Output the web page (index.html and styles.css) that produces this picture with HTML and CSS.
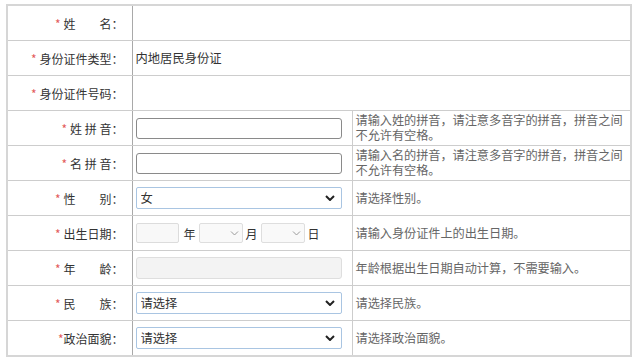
FILE: index.html
```html
<!DOCTYPE html>
<html lang="zh-CN">
<head>
    <meta charset="UTF-8">
    <title>个人信息</title>
    <link rel="stylesheet" href="styles.css">
</head>
<body>

<!-- 基本信息表 -->
<table class="info-table">
    <colgroup>
        <col class="col-label">
        <col class="col-field">
        <col class="col-hint">
    </colgroup>
    <tr>
        <td class="label"><span class="req">*</span>姓　　名：</td>
        <td colspan="2"></td>
    </tr>
    <tr>
        <td class="label"><span class="req">*</span>身份证件类型：</td>
        <td colspan="2" class="value">内地居民身份证</td>
    </tr>
    <tr>
        <td class="label"><span class="req">*</span>身份证件号码：</td>
        <td colspan="2"></td>
    </tr>
    <tr>
        <td class="label"><span class="req">*</span>姓 拼 音：</td>
        <td class="field"><input type="text" class="text-input"></td>
        <td class="hint">请输入姓的拼音，请注意多音字的拼音，拼音之间不允许有空格。</td>
    </tr>
    <tr>
        <td class="label"><span class="req">*</span>名 拼 音：</td>
        <td class="field"><input type="text" class="text-input"></td>
        <td class="hint">请输入名的拼音，请注意多音字的拼音，拼音之间不允许有空格。</td>
    </tr>
    <tr>
        <td class="label"><span class="req">*</span>性　　别：</td>
        <td class="field">
            <span class="select-wrap">
                <select class="select">
                    <option>女</option>
                    <option>男</option>
                </select>
                <svg class="chevron" width="10" height="6" viewBox="0 0 10 6"><path d="M1 1 L5 5 L9 1" fill="none" stroke="#222" stroke-width="2"/></svg>
            </span>
        </td>
        <td class="hint">请选择性别。</td>
    </tr>
    <tr>
        <td class="label"><span class="req">*</span>出生日期：</td>
        <td class="field">
            <div class="date-row">
                <input type="text" class="date-input">
                <span>年</span>
                <span class="select-wrap">
                    <select class="date-select"><option></option></select>
                    <svg class="chevron" width="9" height="5" viewBox="0 0 9 5"><path d="M1 0.5 L4.5 4 L8 0.5" fill="none" stroke="#9a9a9a" stroke-width="1"/></svg>
                </span>
                <span>月</span>
                <span class="select-wrap">
                    <select class="date-select"><option></option></select>
                    <svg class="chevron" width="9" height="5" viewBox="0 0 9 5"><path d="M1 0.5 L4.5 4 L8 0.5" fill="none" stroke="#9a9a9a" stroke-width="1"/></svg>
                </span>
                <span>日</span>
            </div>
        </td>
        <td class="hint">请输入身份证件上的出生日期。</td>
    </tr>
    <tr>
        <td class="label"><span class="req">*</span>年　　龄：</td>
        <td class="field"><input type="text" class="text-input disabled" disabled></td>
        <td class="hint">年龄根据出生日期自动计算，不需要输入。</td>
    </tr>
    <tr>
        <td class="label"><span class="req">*</span>民　　族：</td>
        <td class="field">
            <span class="select-wrap">
                <select class="select"><option>请选择</option></select>
                <svg class="chevron" width="10" height="6" viewBox="0 0 10 6"><path d="M1 1 L5 5 L9 1" fill="none" stroke="#222" stroke-width="2"/></svg>
            </span>
        </td>
        <td class="hint">请选择民族。</td>
    </tr>
    <tr>
        <td class="label"><span class="req tight">*</span>政治面貌：</td>
        <td class="field">
            <span class="select-wrap">
                <select class="select"><option>请选择</option></select>
                <svg class="chevron" width="10" height="6" viewBox="0 0 10 6"><path d="M1 1 L5 5 L9 1" fill="none" stroke="#222" stroke-width="2"/></svg>
            </span>
        </td>
        <td class="hint">请选择政治面貌。</td>
    </tr>
</table>

</body>
</html>
```

FILE: styles.css
```css
/* General styles */
body {
    margin: 0;
    padding: 4px 0 0 6px;
    background-color: #fff;
    font-family: "Noto Sans CJK SC", "Liberation Sans", sans-serif;
    font-size: 12px;
    color: #333;
}

/* Table layout */
.info-table {
    width: 626px;
    border-collapse: collapse;
    table-layout: fixed;
    border: 2px solid #d6d6d6;
}

.col-label {
    width: 125px;
}

.col-field {
    width: 220px;
}

.info-table td {
    height: 34px;
    padding: 0;
    border: 1px solid #cdcdcd;
    vertical-align: middle;
}

.label {
    text-align: right;
    padding-right: 8px !important;
    font-size: 12px;
    border-right-color: #a9a9a9 !important;
}

.req {
    color: #e35b5b;
    margin-right: 3px;
}

.req.tight {
    margin-right: 0;
}

.value {
    padding-left: 3px !important;
    font-size: 12.3px;
}

.field {
    padding-left: 3px !important;
}

.hint {
    padding: 0 0 0 3px !important;
    color: #666;
    font-size: 12.2px;
    line-height: 15px;
    letter-spacing: -0.05px;
}

/* Inputs */
.text-input {
    display: block;
    box-sizing: border-box;
    width: 206px;
    height: 21px;
    margin: 0;
    padding: 0 4px;
    border: 1px solid #8a8a8a;
    border-radius: 3px;
    font: inherit;
}

.text-input.disabled {
    height: 22px;
    background-color: #f3f3f3;
    border-color: #dedede;
}

.select-wrap {
    position: relative;
    display: inline-block;
    vertical-align: middle;
}

.select {
    display: block;
    box-sizing: border-box;
    width: 206px;
    height: 22px;
    margin: 0;
    padding: 0 4px;
    appearance: none;
    -webkit-appearance: none;
    background-color: #fff;
    border: 1px solid #a9c5e2;
    border-radius: 2px;
    font: inherit;
    font-size: 12.3px;
    color: #333;
}

.chevron {
    position: absolute;
    right: 7px;
    top: 8px;
    pointer-events: none;
}

/* Birth date row */
.date-row {
    display: flex;
    align-items: center;
    gap: 3px;
}

.date-input {
    box-sizing: border-box;
    width: 43px;
    height: 20px;
    margin: 0 2px 0 0;
    background-color: #f8f8f8;
    border: 1px solid #dcdcdc;
    border-radius: 2px;
}

.date-select {
    display: block;
    box-sizing: border-box;
    width: 44px;
    height: 20px;
    margin: 0;
    appearance: none;
    -webkit-appearance: none;
    background-color: #f9f9f9;
    border: 1px solid #dedede;
    border-radius: 2px;
}

.date-row .chevron {
    right: 4px;
    top: 8px;
}
```
